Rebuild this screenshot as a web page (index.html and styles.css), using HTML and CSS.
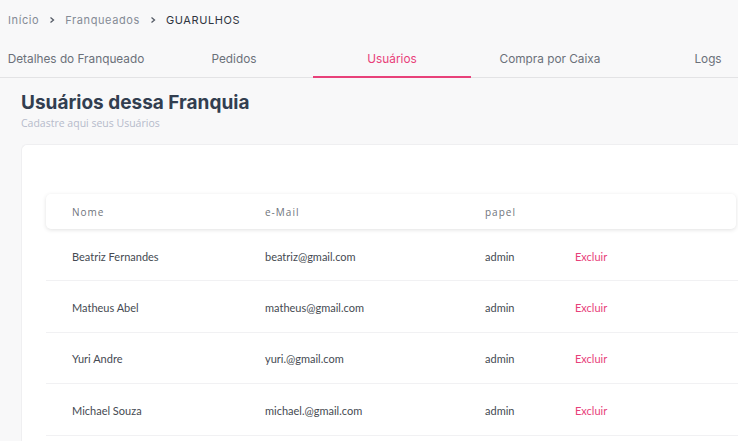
FILE: index.html
```html
<!DOCTYPE html>
<html lang="pt-BR">
<head>
<meta charset="utf-8">
<title>Usuários dessa Franquia</title>
<link rel="stylesheet" href="styles.css">
</head>
<body>
<nav class="crumbs">
  <span class="crumb">Início</span>
  <svg class="sep" viewBox="0 0 8 8" width="8" height="8"><path d="M2.5 1.5 L5.5 4 L2.5 6.5" fill="none" stroke="#555b66" stroke-width="1.3"/></svg>
  <span class="crumb">Franqueados</span>
  <svg class="sep" viewBox="0 0 8 8" width="8" height="8"><path d="M2.5 1.5 L5.5 4 L2.5 6.5" fill="none" stroke="#555b66" stroke-width="1.3"/></svg>
  <span class="crumb current">GUARULHOS</span>
</nav>
<div class="tabs">
  <div class="tab">Detalhes do Franqueado</div>
  <div class="tab">Pedidos</div>
  <div class="tab active">Usuários</div>
  <div class="tab">Compra por Caixa</div>
  <div class="tab">Logs</div>
</div>
<main class="content">
  <h1 class="title">Usuários dessa Franquia</h1>
  <p class="subtitle">Cadastre aqui seus Usuários</p>
  <section class="card">
    <div class="table">
      <div class="thead">
        <span class="c-name">Nome</span>
        <span class="c-mail">e-Mail</span>
        <span class="c-role">papel</span>
      </div>
      <div class="row">
        <span class="c-name">Beatriz Fernandes</span>
        <span class="c-mail">beatriz@gmail.com</span>
        <span class="c-role">admin</span>
        <span class="c-act">Excluir</span>
      </div>
      <div class="row">
        <span class="c-name">Matheus Abel</span>
        <span class="c-mail">matheus@gmail.com</span>
        <span class="c-role">admin</span>
        <span class="c-act">Excluir</span>
      </div>
      <div class="row">
        <span class="c-name">Yuri Andre</span>
        <span class="c-mail">yuri.@gmail.com</span>
        <span class="c-role">admin</span>
        <span class="c-act">Excluir</span>
      </div>
      <div class="row">
        <span class="c-name">Michael Souza</span>
        <span class="c-mail">michael.@gmail.com</span>
        <span class="c-role">admin</span>
        <span class="c-act">Excluir</span>
      </div>
    </div>
  </section>
</main>
</body>
</html>
```
FILE: styles.css
```css
html, body {
  margin: 0;
  padding: 0;
  background: #f8f8f9;
  overflow: hidden;
  width: 738px;
  height: 441px;
}
body {
  font-family: "Inter", "Open Sans", sans-serif;
  color: #3a3f47;
}
.crumbs {
  display: flex;
  align-items: center;
  gap: 9px;
  height: 38px;
  padding: 2px 0 0 8px;
  box-sizing: border-box;
  font-size: 11px;
  letter-spacing: 0.6px;
  color: #858b96;
}
.crumb.current { color: #2f3540; }
.sep { display: block; }
.tabs {
  display: flex;
  margin-left: -3px;
  height: 39px;
  border-bottom: 1px solid #e3e3e5;
  width: 790px;
}
.tab {
  flex: 0 0 158px;
  display: flex;
  align-items: center;
  justify-content: center;
  padding-top: 4px;
  font-size: 11.8px;
  color: #6b7079;
  box-sizing: border-box;
  border-bottom: 2px solid transparent;
  margin-bottom: -1px;
}
.tab.active {
  color: #e8417a;
  border-bottom-color: #e8417a;
}
.content {
  padding-left: 21px;
}
.title {
  margin: 13px 0 0;
  font-size: 19px;
  font-weight: 700;
  color: #323e50;
  line-height: 24px;
}
.subtitle {
  margin: 1px 0 0;
  font-size: 10.5px;
  color: #b6bbcb;
  line-height: 14px;
  font-family: "Open Sans", sans-serif;
}
.card {
  margin-top: 14px;
  background: #fff;
  border: 1px solid #efeff1;
  border-right: none;
  border-radius: 6px 0 0 0;
  padding: 49px 0 0 24px;
  height: 300px;
}
.table {
  font-family: "Lato", "Open Sans", sans-serif;
  font-size: 11px;
}
.thead {
  display: flex;
  align-items: center;
  height: 35px;
  padding-top: 1px;
  box-sizing: border-box;
  background: #fff;
  border-radius: 5px;
  box-shadow: 0 1px 4px rgba(0,0,0,0.12);
  margin-right: 2px;
  font-family: "Open Sans", sans-serif;
  font-size: 10px;
  letter-spacing: 1px;
  color: #6f747c;
}
.row {
  display: flex;
  align-items: center;
  height: 51.4px;
  padding-top: 2px;
  box-sizing: border-box;
  border-bottom: 1px solid #f1f1f3;
  color: #454a52;
}
.thead + .row { height: 52.4px; padding-top: 3px; }
.c-name { width: 219px; padding-left: 26px; box-sizing: border-box; flex: none; }
.c-mail { width: 220px; flex: none; }
.c-role { width: 90px; flex: none; }
.c-act { color: #e8417a; }
```
